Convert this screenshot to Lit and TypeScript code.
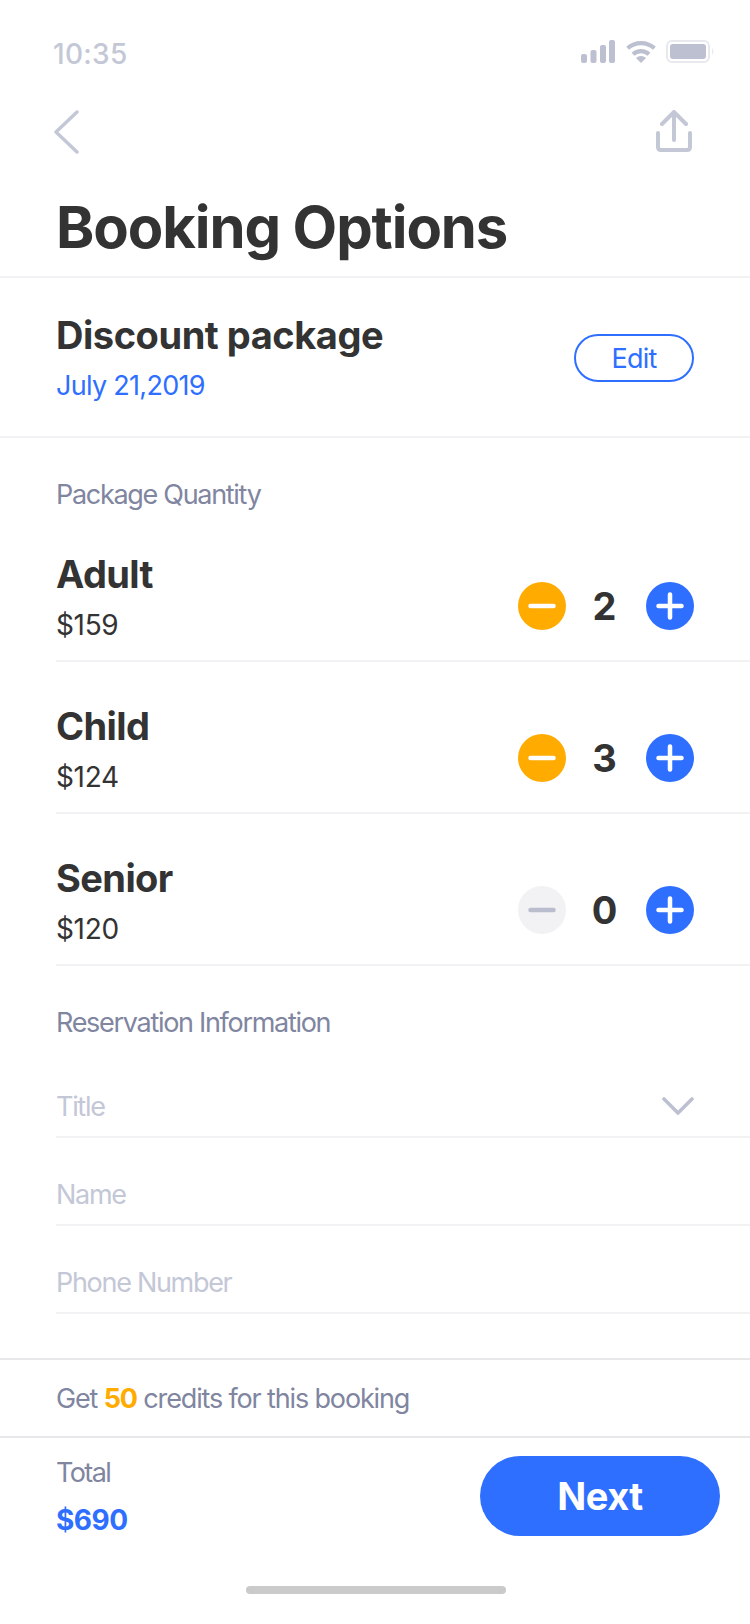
import { LitElement, html, css } from "lit";
import { customElement } from "lit/decorators.js";

const rows = [
  { name: "Adult", price: "$159", qty: 2 },
  { name: "Child", price: "$124", qty: 3 },
  { name: "Senior", price: "$120", qty: 0 },
];
const fields = ["Title", "Name", "Phone Number"];

@customElement("app-root")
export class AppRoot extends LitElement {
  static styles = css`
    :host {
      display: block;
      width: 750px;
      height: 1624px;
      background: #fff;
      overflow: hidden;
      font-family: Inter, "Liberation Sans", sans-serif;
      color: #333;
    }
    * { box-sizing: border-box; }
    svg { display: block; flex: none; }
    .status {
      height: 92px;
      padding: 40px 36px 0 53px;
      display: flex;
      justify-content: space-between;
      align-items: flex-start;
    }
    .time { font-size: 28px; line-height: 28px; font-weight: 500; color: #c3c7d6; letter-spacing: 0.3px; }
    .sys { display: flex; gap: 10px; }
    .nav {
      height: 106px;
      padding: 18px 57px 0 54px;
      display: flex;
      justify-content: space-between;
      align-items: flex-start;
    }
    .title {
      margin: 0;
      padding: 0 56px 20px;
      box-sizing: content-box;
      height: 58px;
      font-size: 58px;
      line-height: 58px;
      font-weight: 700;
      letter-spacing: -1.1px;
      border-bottom: 2px solid #f2f2f4;
    }
    .package {
      height: 160px;
      padding: 0 56px;
      display: flex;
      justify-content: space-between;
      align-items: center;
      border-bottom: 2px solid #f2f2f4;
    }
    .pkg-name { font-size: 38px; line-height: 46px; font-weight: 700; letter-spacing: -0.45px; }
    .pkg-date { font-size: 27px; line-height: 34px; margin-top: 11px; color: #2e6fff; letter-spacing: -0.7px; }
    .edit {
      width: 120px;
      height: 48px;
      margin-top: 2px;
      border: 2px solid #2e6fff;
      border-radius: 24px;
      background: #fff;
      color: #2e6fff;
      font: 400 27px/1 Inter, "Liberation Sans", sans-serif;
      letter-spacing: -0.8px;
      padding: 0;
    }
    .label { font-size: 27px; line-height: 32px; color: #8085a0; padding-left: 56px; letter-spacing: -1.3px; }
    .label.first { margin: 41px 0 -1px; }
    .label.second { margin-top: 41px; }
    .row {
      margin-left: 56px;
      height: 152px;
      padding: 41px 56px 0 0;
      display: flex;
      justify-content: space-between;
      align-items: flex-start;
      border-bottom: 2px solid #f2f2f4;
    }
    .row-name { font-size: 38px; line-height: 46px; font-weight: 700; letter-spacing: -0.6px; }
    .row-price { font-size: 28px; line-height: 34px; margin-top: 11px; letter-spacing: -0.35px; }
    .stepper { display: flex; align-items: center; margin-top: 31px; }
    .circle {
      width: 48px;
      height: 48px;
      border: 0;
      padding: 0;
      border-radius: 50%;
      display: flex;
      align-items: center;
      justify-content: center;
    }
    .circle.minus { background: #ffab00; }
    .circle.plus { background: #2e6fff; }
    .circle.off { background: #f2f2f4; }
    .qty { width: 80px; padding-right: 3px; text-align: center; font-size: 38px; line-height: 48px; font-weight: 700; }
    .fields { margin-top: 11px; }
    .field {
      margin-left: 56px;
      height: 88px;
      padding: 0 56px 13px 0;
      display: flex;
      justify-content: space-between;
      align-items: flex-end;
      border-bottom: 2px solid #f2f2f4;
      font-size: 27px;
      line-height: 32px;
      letter-spacing: -1.3px;
      color: #c3c7d6;
    }
    .chevron { margin-bottom: 8px; }
    .credits {
      margin-top: 44px;
      height: 80px;
      padding: 0 56px;
      display: flex;
      align-items: center;
      border-top: 2px solid #e8e8ea;
      border-bottom: 2px solid #e8e8ea;
      font-size: 27px;
      letter-spacing: -1.15px;
      color: #8085a0;
      white-space: pre;
    }
    .credits b { color: #ffab00; font-weight: 700; }
    .bottom {
      padding: 18px 30px 0 56px;
      display: flex;
      justify-content: space-between;
      align-items: flex-start;
    }
    .total-label { font-size: 27px; line-height: 32px; color: #8085a0; margin-top: 1px; letter-spacing: -1.6px; }
    .total { font-size: 28px; line-height: 36px; font-weight: 700; color: #2e6fff; margin-top: 13px; letter-spacing: -0.5px; }
    .next {
      width: 240px;
      height: 80px;
      border: 0;
      border-radius: 40px;
      background: #2e6fff;
      color: #fff;
      font: 700 38px/1 Inter, "Liberation Sans", sans-serif;
      letter-spacing: -0.5px;
      padding: 0;
    }
    .home {
      width: 260px;
      height: 8px;
      border-radius: 4px;
      background: #cacaca;
      margin: 48px 0 0 246px;
    }
  `;

  private minusIcon(color: string) {
    return html`<svg width="28" height="6" viewBox="0 0 28 6">
      <line x1="2.5" y1="3" x2="25.5" y2="3" stroke=${color} stroke-width="4.5" stroke-linecap="round"></line>
    </svg>`;
  }

  private plusIcon() {
    return html`<svg width="28" height="28" viewBox="0 0 28 28" fill="none" stroke="#fff" stroke-width="4.5" stroke-linecap="round">
      <line x1="2.5" y1="14" x2="25.5" y2="14"></line>
      <line x1="14" y1="2.5" x2="14" y2="25.5"></line>
    </svg>`;
  }

  render() {
    return html`
      <div class="status">
        <div class="time">10:35</div>
        <div class="sys">
          <svg width="35" height="23" viewBox="0 0 35 23" fill="#bcc0d0">
            <rect x="0" y="14" width="6" height="9" rx="2"></rect>
            <rect x="9.5" y="10" width="6" height="13" rx="2"></rect>
            <rect x="19" y="5" width="6" height="18" rx="2"></rect>
            <rect x="28" y="0" width="6" height="23" rx="2"></rect>
          </svg>
          <svg width="30" height="24" viewBox="0 0 30 24" fill="none" stroke="#bcc0d0" stroke-width="4.2">
            <path d="M1.6 8.2 A 20 20 0 0 1 28.4 8.2"></path>
            <path d="M7 14.2 A 12 12 0 0 1 23 14.2"></path>
            <path d="M15 23 L10 18 A 7.5 7.5 0 0 1 20 18 Z" fill="#bcc0d0" stroke="none"></path>
          </svg>
          <svg width="48" height="23" viewBox="0 0 48 23">
            <rect x="1" y="1" width="42" height="21" rx="5" fill="none" stroke="#e8e9ef" stroke-width="2"></rect>
            <rect x="4" y="4" width="36" height="15" rx="3" fill="#bcc0d0"></rect>
            <path d="M46 8 A 5 5 0 0 1 46 15 Z" fill="#e8e9ef"></path>
          </svg>
        </div>
      </div>
      <div class="nav">
        <svg width="26" height="44" viewBox="0 0 26 44" fill="none" stroke="#c3c7d6" stroke-width="3.4" stroke-linecap="round" stroke-linejoin="round">
          <path d="M23 2 L2 22 L23 42"></path>
        </svg>
        <svg width="38" height="42" viewBox="0 0 38 42" fill="none" stroke="#c3c7d6" stroke-width="4" stroke-linecap="round" stroke-linejoin="round">
          <path d="M7 14 L19 2 L31 14"></path>
          <path d="M19 3 V30"></path>
          <path d="M3 23 V37 Q3 40 6 40 H32 Q35 40 35 37 V23"></path>
        </svg>
      </div>
      <h1 class="title">Booking Options</h1>
      <section class="package">
        <div>
          <div class="pkg-name">Discount package</div>
          <div class="pkg-date">July 21,2019</div>
        </div>
        <button class="edit">Edit</button>
      </section>
      <div class="label first">Package Quantity</div>
      ${rows.map(
        (r) => html`<div class="row">
          <div>
            <div class="row-name">${r.name}</div>
            <div class="row-price">${r.price}</div>
          </div>
          <div class="stepper">
            <button class="circle ${r.qty > 0 ? "minus" : "off"}">${this.minusIcon(r.qty > 0 ? "#fff" : "#b9bdcd")}</button>
            <div class="qty">${r.qty}</div>
            <button class="circle plus">${this.plusIcon()}</button>
          </div>
        </div>`
      )}
      <div class="label second">Reservation Information</div>
      <div class="fields">
        ${fields.map(
          (f, i) => html`<div class="field">
            <span>${f}</span>
            ${i === 0
              ? html`<svg class="chevron" width="32" height="18" viewBox="0 0 32 18" fill="none" stroke="#bcc0d0" stroke-width="3.6" stroke-linecap="round" stroke-linejoin="round">
                  <path d="M2 2 L16 16 L30 2"></path>
                </svg>`
              : ""}
          </div>`
        )}
      </div>
      <div class="credits">Get <b>50</b> credits for this booking</div>
      <div class="bottom">
        <div>
          <div class="total-label">Total</div>
          <div class="total">$690</div>
        </div>
        <button class="next">Next</button>
      </div>
      <div class="home"></div>
    `;
  }
}
